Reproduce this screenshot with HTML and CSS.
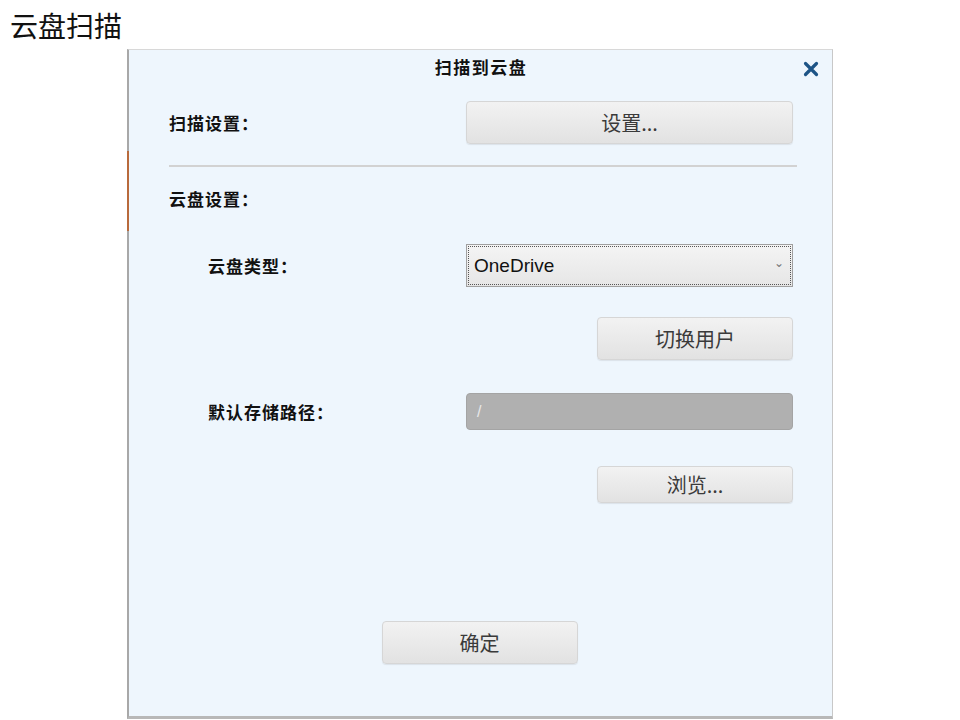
FILE: index.html
```html
<!DOCTYPE html>
<html>
<head>
  <meta charset="utf-8">
  <link rel="stylesheet" href="styles.css">
  <title>云盘扫描</title>
</head>
<body>
  <h1 class="page-title">云盘扫描</h1>
  <div class="dialog">
    <div class="dialog-head">
      <span class="dialog-title">扫描到云盘</span>
      <span class="close">
        <svg width="16" height="16" viewBox="0 0 16 16"><path d="M2.5 2.5 L13.5 13.5 M13.5 2.5 L2.5 13.5" stroke="#1d5486" stroke-width="3.2" stroke-linecap="round"/></svg>
      </span>
    </div>

    <div class="row row-scan">
      <span class="label">扫描设置：</span>
      <button class="btn btn-wide">设置...</button>
    </div>

    <hr class="sep">

    <div class="section-label">云盘设置：</div>

    <div class="row row-type">
      <span class="label sub">云盘类型：</span>
      <div class="select">
        <span>OneDrive</span>
        <span class="caret">&#x2304;</span>
      </div>
    </div>

    <div class="row right row-switch">
      <button class="btn btn-mid">切换用户</button>
    </div>

    <div class="row row-path">
      <span class="label sub">默认存储路径：</span>
      <div class="path-input">/</div>
    </div>

    <div class="row right row-browse">
      <button class="btn btn-mid btn-short">浏览...</button>
    </div>

    <div class="footer">
      <button class="btn btn-mid">确定</button>
    </div>
  </div>
</body>
</html>
```

FILE: styles.css
```css
body {
  margin: 0;
  font-family: "Noto Sans CJK SC", "Liberation Sans", sans-serif;
  background: #ffffff;
  color: #111;
}

.page-title {
  margin: 0;
  padding: 5px 0 0 10px;
  height: 49px;
  box-sizing: border-box;
  font-size: 28px;
  font-weight: normal;
  line-height: 40px;
}

.dialog {
  margin-left: 127px;
  width: 706px;
  height: 670px;
  box-sizing: border-box;
  background: #eef6fd;
  border-left: 2px solid #a8a8a8;
  border-right: 1px solid #c8c8c8;
  border-top: 1px solid #d8d8d8;
  border-bottom: 3px solid #b8b8b8;
  position: relative;
  padding: 0 39px 0 40px;
}

.dialog::before {
  content: "";
  position: absolute;
  left: -2px;
  top: 101px;
  width: 2px;
  height: 80px;
  background: #b86a3c;
}

.dialog-head {
  height: 36px;
  box-sizing: border-box;
  padding-bottom: 3px;
  display: flex;
  align-items: center;
  justify-content: center;
  position: relative;
}

.dialog-title {
  font-size: 17px;
  font-weight: bold;
  letter-spacing: 1.5px;
}

.close {
  position: absolute;
  right: -26px;
  top: 8px;
}

.row {
  display: flex;
  align-items: center;
  justify-content: space-between;
}

.row.right {
  justify-content: flex-end;
}

.label {
  font-size: 17px;
  font-weight: bold;
  letter-spacing: 1px;
}

.label.sub {
  margin-left: 39px;
}

.row-scan {
  margin-top: 15px;
}

.btn {
  font-family: "Noto Sans CJK SC", "Liberation Sans", sans-serif;
  font-size: 20px;
  color: #3a3a3a;
  border: 1px solid #d6d6d6;
  border-radius: 4px;
  background: linear-gradient(#f2f2f2, #e2e2e2);
  box-shadow: 0 1px 1px rgba(0, 0, 0, 0.08);
  cursor: pointer;
  padding: 0;
}

.btn-wide {
  width: 327px;
  height: 43px;
}

.btn-mid {
  width: 196px;
  height: 43px;
}

.btn-short {
  height: 37px;
}

.sep {
  margin: 21px -4px 0 0;
  border: none;
  height: 2px;
  background: #d2d2d2;
}

.section-label {
  font-size: 17px;
  font-weight: bold;
  letter-spacing: 1px;
  margin-top: 21px;
  line-height: 22px;
}

.row-type {
  margin-top: 34px;
}

.select {
  width: 327px;
  height: 43px;
  box-sizing: border-box;
  border: 1px solid #a0a0a0;
  outline: 1px dotted #555;
  outline-offset: -3px;
  background: linear-gradient(#f4f4f4, #e6e6e6);
  display: flex;
  align-items: center;
  justify-content: space-between;
  padding: 0 8px 0 7px;
  font-family: "Liberation Sans", sans-serif;
  font-size: 19px;
  color: #111;
}

.caret {
  font-size: 12px;
  color: #777;
  margin-top: -6px;
}

.row-switch {
  margin-top: 30px;
}

.row-path {
  margin-top: 33px;
}

.path-input {
  width: 327px;
  height: 37px;
  box-sizing: border-box;
  border: 1px solid #a4a4a4;
  border-radius: 4px;
  background: #b0b0b0;
  color: #e8e8e8;
  font-size: 16px;
  line-height: 35px;
  padding-left: 10px;
  font-family: "Liberation Sans", sans-serif;
}

.row-browse {
  margin-top: 36px;
}

.footer {
  display: flex;
  justify-content: center;
  margin-top: 118px;
  padding-right: 3px;
}
```
